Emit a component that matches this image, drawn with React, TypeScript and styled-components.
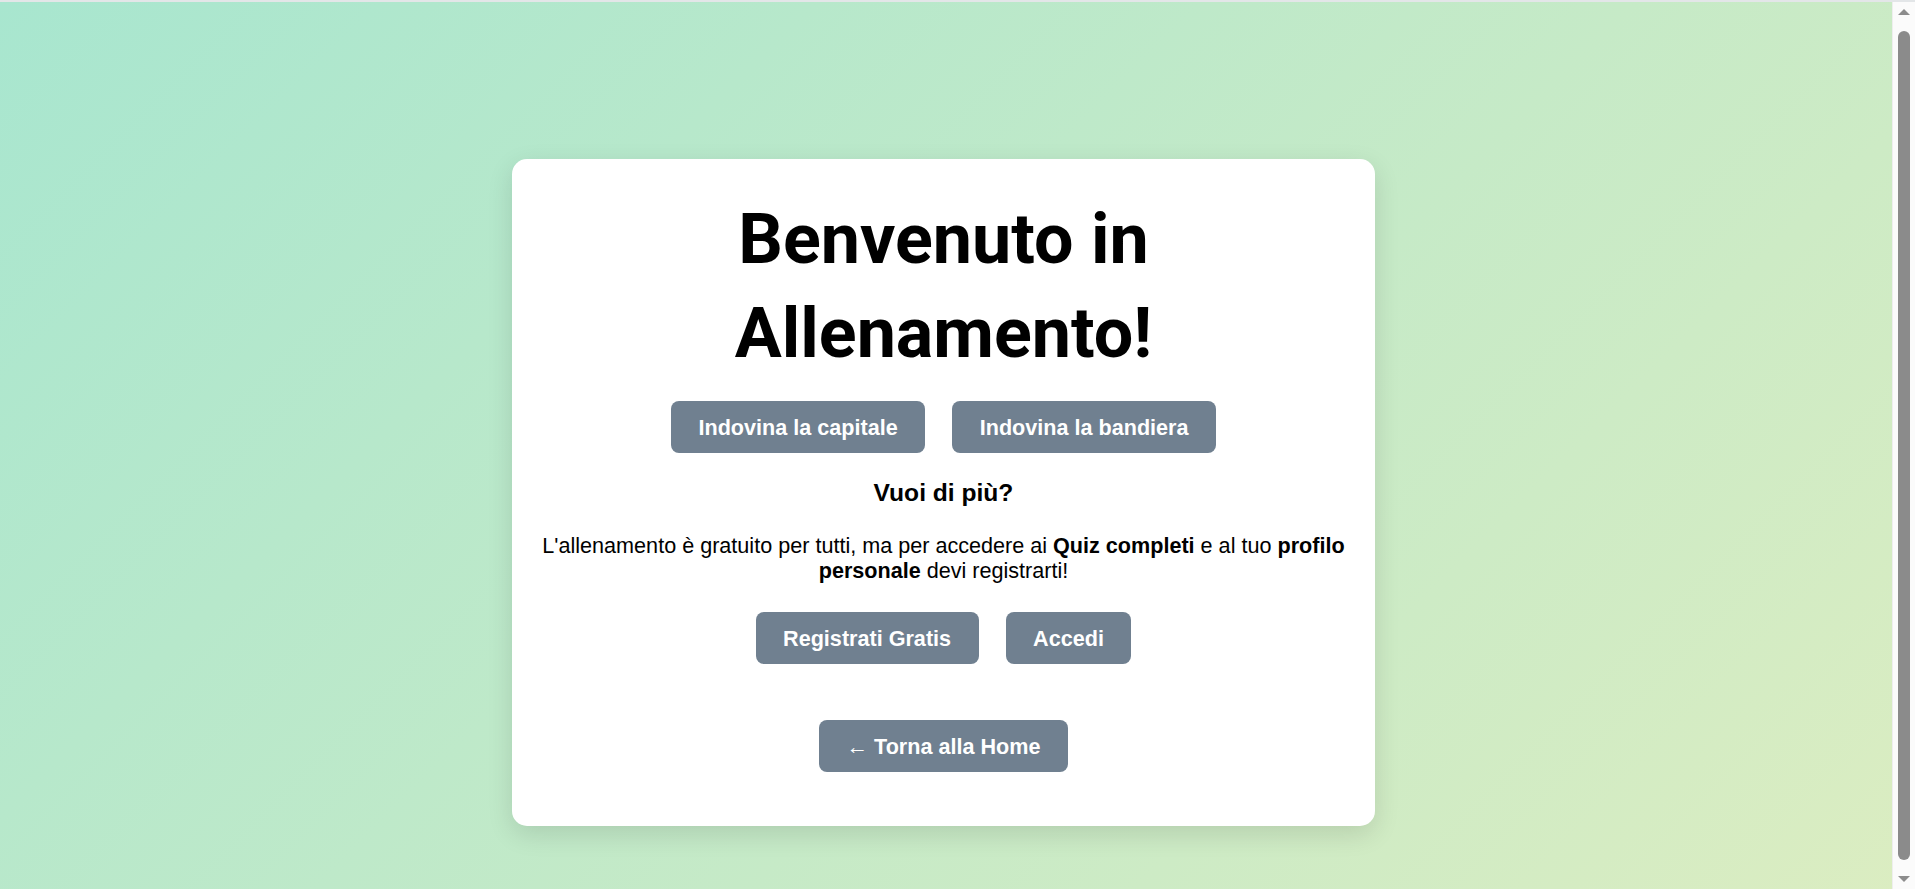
import React from "react";
import styled, { createGlobalStyle } from "styled-components";

const GlobalStyle = createGlobalStyle`
  html, body {
    margin: 0;
    padding: 0;
  }

  body {
    min-height: 100vh;
    background: linear-gradient(135deg, #a8e6cf 0%, #dcedc1 100%);
    border-top: 2px solid #e3e6e8;
    box-sizing: border-box;
    font-family: "Liberation Sans", Arial, sans-serif;
    color: #000;
  }
`;

const Page = styled.div`
  min-height: 100vh;
  padding: 157px 28px 104px 0;
  box-sizing: border-box;
  display: flex;
  justify-content: center;
  align-items: flex-start;
`;

const Card = styled.div`
  width: 863px;
  box-sizing: border-box;
  background: #ffffff;
  border-radius: 15px;
  box-shadow: 0 8px 26px rgba(0, 0, 0, 0.12);
  padding: 33px 24px 54px;
  display: flex;
  flex-direction: column;
  align-items: center;
  text-align: center;
`;

const Title = styled.h1`
  margin: 0 0 21px;
  font-family: "Comic Sans MS", Roboto, sans-serif;
  font-weight: 700;
  font-size: 70px;
  line-height: 94px;
`;

const ButtonRow = styled.div<{ $gap?: number }>`
  display: flex;
  justify-content: center;
  gap: ${(p) => p.$gap ?? 27}px;
`;

const Button = styled.button`
  border: none;
  background: #708090;
  color: #ffffff;
  font-family: "Liberation Sans", Arial, sans-serif;
  font-weight: 700;
  font-size: 21.6px;
  line-height: 25px;
  padding: 13.5px 27.5px;
  border-radius: 8px;
  cursor: pointer;

  &:hover {
    background: #5f6e7d;
  }
`;

const Subtitle = styled.h3`
  margin: 26px 0 0;
  font-size: 24.6px;
  font-weight: 700;
  line-height: 28.3px;
`;

const Text = styled.p`
  margin: 26px 0 29px;
  font-size: 21.6px;
  line-height: 25px;
`;

const HomeButton = styled(Button)`
  margin-top: 56px;
`;

const Arrow = styled.span`
  font-weight: 400;
`;

/* browser scrollbar as seen in the screenshot */
const Scrollbar = styled.div`
  position: fixed;
  top: 2px;
  right: 0;
  bottom: 0;
  width: 23px;
  background: #fbfbfb;
  border-left: 1px solid #eeeeee;
  box-sizing: border-box;
  display: flex;
  flex-direction: column;
  align-items: center;
  padding: 7px 0;
`;

const ScrollArrow = styled.div<{ $down?: boolean }>`
  width: 0;
  height: 0;
  border-left: 6px solid transparent;
  border-right: 6px solid transparent;
  ${(p) =>
    p.$down
      ? "border-top: 6px solid #8c8c8c;"
      : "border-bottom: 6px solid #8c8c8c;"}
`;

const ScrollThumb = styled.div`
  flex: 1;
  width: 12px;
  margin: 16px 0;
  border-radius: 6px;
  background: #8b8b8b;
`;

export default function App() {
  return (
    <>
      <GlobalStyle />
      <Page>
        <Card>
          <Title>Benvenuto in Allenamento!</Title>

          <ButtonRow>
            <Button>Indovina la capitale</Button>
            <Button>Indovina la bandiera</Button>
          </ButtonRow>

          <Subtitle>Vuoi di più?</Subtitle>
          <Text>
            L'allenamento è gratuito per tutti, ma per accedere ai{" "}
            <strong>Quiz completi</strong> e al tuo <strong>profilo personale</strong>{" "}
            devi registrarti!
          </Text>

          <ButtonRow>
            <Button>Registrati Gratis</Button>
            <Button>Accedi</Button>
          </ButtonRow>

          <HomeButton>
            <Arrow>←</Arrow> Torna alla Home
          </HomeButton>
        </Card>
      </Page>
      <Scrollbar>
        <ScrollArrow />
        <ScrollThumb />
        <ScrollArrow $down />
      </Scrollbar>
    </>
  );
}
